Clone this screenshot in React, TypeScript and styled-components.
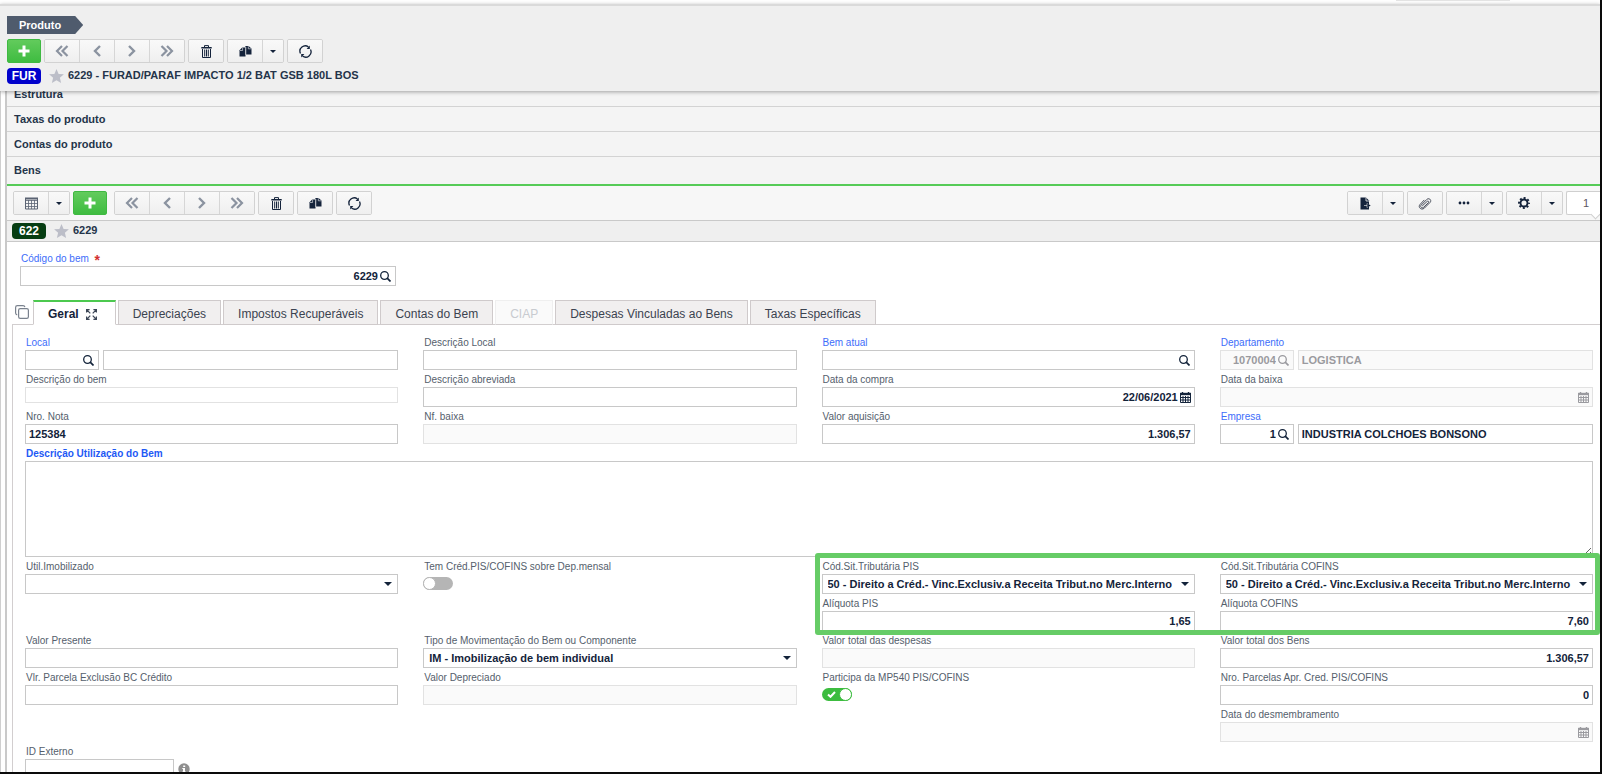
import React, { ReactNode, useId } from "react";
import styled, { createGlobalStyle, css } from "styled-components";

const ink = "#24344a";
const blue = "#3d6dfa";

const GlobalStyle = createGlobalStyle`
  *, *::before, *::after { box-sizing: border-box; }
  body { margin: 0; background: #fff; color: ${ink}; font-family: "Liberation Sans", Arial, sans-serif; font-size: 11px; }
  button, input, select, textarea { font: inherit; color: inherit; margin: 0; }
  svg { display: block; flex: none; }
`;

const Page = styled.div`
  display: flex;
  flex-direction: column;
  height: 100vh;
  overflow: hidden;
  border-right: 2px solid #0a0a0a;
  border-bottom: 2px solid #0a0a0a;
`;

const TopStrip = styled.div`
  display: flex;
  justify-content: flex-end;
  flex: none;
  height: 4px;
  padding-right: 90px;
`;

const TopHandle = styled.span`
  width: 114px;
  height: 1px;
  background: #e4e4e4;
`;

const Header = styled.header`
  position: relative;
  z-index: 2;
  flex: none;
  display: flex;
  flex-direction: column;
  align-items: flex-start;
  gap: 5px;
  padding: 10px 7px 7px;
  border-top: 2px solid #dadada;
  background: #efefef;
  box-shadow: 0 1px 4px rgba(0, 0, 0, 0.35);
`;

const Crumb = styled.h1`
  margin: 0;
  height: 18px;
  padding: 0 22px 0 12px;
  background: #4f5b6d;
  clip-path: polygon(0 0, calc(100% - 8px) 0, 100% 50%, calc(100% - 8px) 100%, 0 100%);
  color: #fff;
  font-size: 11px;
  font-weight: bold;
  line-height: 18px;
`;

const Bar = styled.div`
  display: flex;
  gap: 3px;
`;

const Group = styled.div`
  display: flex;
  border: 1px solid #d2d2d2;
  border-radius: 2px;
  overflow: hidden;
`;

const ToolButton = styled.button<{ $narrow?: boolean }>`
  display: flex;
  align-items: center;
  justify-content: center;
  width: ${(p) => (p.$narrow ? 21 : 35)}px;
  height: 22px;
  padding: 0;
  border: solid #d6d6d6;
  border-width: 0 0 0 1px;
  background: linear-gradient(#f9f9f9, #efefef);
  color: #14233b;
  &:first-child {
    width: 34px;
    border-left: 0;
  }
  &:disabled { color: #8b93a0; }
`;

const AddButton = styled.button`
  display: flex;
  align-items: center;
  justify-content: center;
  width: 34px;
  height: 24px;
  padding: 0;
  border: 1px solid #3fb942;
  border-radius: 2px;
  background: linear-gradient(#62cb5c, #3fbc41);
  color: #fff;
`;

const TitleRow = styled.div<{ $strip?: boolean }>`
  display: flex;
  align-items: center;
  height: 16px;
  font-weight: bold;
  line-height: 14px;
  ${(p) =>
    p.$strip &&
    css`
      height: 22px;
      padding-left: 5px;
      border: solid #c9c9c9;
      border-width: 1px 0;
      background: #efefef;
    `}
`;

const Badge = styled.span<{ $color: string }>`
  width: 34px;
  height: 16px;
  border-radius: 4px;
  background: ${(p) => p.$color};
  color: #fff;
  font-size: 12px;
  font-weight: bold;
  line-height: 16px;
  text-align: center;
`;

const Title = styled.span`
  padding-bottom: 2px;
`;

const Star = styled.svg`
  margin: 0 4px 0 8px;
`;

const Body = styled.main`
  flex: 1;
  min-height: 0;
  overflow: hidden;
  display: flex;
  padding-left: 4px;
  border-left: 1px solid #cfcfcf;
`;

const Content = styled.div`
  flex: 1;
  min-width: 0;
  border-left: 2px solid #c9c9c9;
`;

const Sections = styled.div`
  margin-top: -9px;
  border-bottom: 2px solid #56cb57;
`;

const Section = styled.h2`
  margin: 0;
  height: 25px;
  padding-left: 7px;
  border-bottom: 1px solid #d3d3d3;
  background: #f4f4f4;
  font-size: 11px;
  font-weight: bold;
  line-height: 24px;
  &:last-child { height: 27px; border: 0; line-height: 27px; }
`;

const SubToolbar = styled.div`
  display: flex;
  justify-content: space-between;
  padding: 5px 0 5px 6px;
  background: #f7f7f7;
`;

const WideBar = styled(Bar)`
  gap: 7px;
`;

const Pager = styled.button`
  position: relative;
  width: 34px;
  height: 24px;
  padding: 0 0 0 5px;
  border: 1px solid #cfcfcf;
  border-right: 0;
  border-radius: 2px 0 0 2px;
  background: #fff;
  color: #5c5560;
  &::after {
    content: "";
    position: absolute;
    right: 1px;
    bottom: -4px;
    width: 7px;
    height: 7px;
    border: solid #cfcfcf;
    border-width: 0 1px 1px 0;
    background: #fff;
    transform: rotate(45deg);
  }
`;

const KeyField = styled.div`
  width: 376px;
  max-width: 100%;
  margin: 8px 0 0 13px;
`;

const Label = styled.label<{ $tone?: "link" | "strong" }>`
  display: block;
  height: 16px;
  padding-left: 1px;
  color: ${(p) => (p.$tone === "strong" ? "#1d59f5" : p.$tone ? blue : "#55606c")};
  font-size: 10px;
  font-weight: ${(p) => (p.$tone === "strong" ? "bold" : "normal")};
  line-height: 18px;
  white-space: nowrap;
`;

const Required = styled.span`
  margin-left: 3px;
  color: #d32f2f;
  font-size: 14px;
  font-weight: bold;
  line-height: 0;
  vertical-align: sub;
`;

const Box = styled.div<{ $off?: boolean; $short?: boolean; $size?: number }>`
  position: relative;
  display: flex;
  align-items: center;
  gap: 2px;
  flex: ${(p) => (p.$size ? "none" : "1")};
  width: ${(p) => (p.$size ? `${p.$size}px` : "auto")};
  height: ${(p) => (p.$short ? 16 : 20)}px;
  padding-right: 3px;
  border: 1px solid ${(p) => (p.$off || p.$short ? "#e2e2e2" : "#c8c8c8")};
  background: ${(p) => (p.$off ? "#fafafa" : "#fff")};
  color: ${(p) => (p.$off ? "#9a9a9f" : "#13233a")};
`;

const Input = styled.input<{ $right?: boolean }>`
  flex: 1;
  min-width: 0;
  height: 100%;
  padding: 0 0 0 3px;
  border: 0;
  outline: 0;
  background: transparent;
  font-weight: bold;
  text-align: ${(p) => (p.$right ? "right" : "left")};
`;

const Select = styled.select`
  flex: 1;
  min-width: 0;
  height: 100%;
  padding: 0 14px 0 5px;
  border: 0;
  outline: 0;
  appearance: none;
  background: transparent;
  font-weight: bold;
`;

const SelectArrow = styled.span`
  position: absolute;
  right: 5px;
  pointer-events: none;
`;

const Line = styled.div`
  display: flex;
  align-items: center;
  gap: 4px;
`;

const TabRow = styled.div`
  display: flex;
  align-items: flex-end;
  margin: 14px 0 0 5px;
  border-bottom: 1px solid #d2cecf;
`;

const Tabs = styled.div`
  display: flex;
  gap: 2px;
  margin-bottom: -1px;
`;

const CopyView = styled.button`
  display: flex;
  width: 21px;
  height: 20px;
  padding: 1px 0 0 3px;
  border: 0;
  background: none;
  color: #7a828e;
`;

const Tab = styled.button<{ $active?: boolean }>`
  display: flex;
  align-items: center;
  height: 25px;
  padding: 3px 14px 0;
  border: 1px solid #cfcacb;
  background: #f1efef;
  color: #3b4350;
  font-size: 12px;
  line-height: 20px;
  white-space: nowrap;
  &:disabled { border-color: #efefef #efefef #d2cecf; background: #fafafa; color: #c8cbd0; }
  ${(p) =>
    p.$active &&
    css`
      gap: 7px;
      padding: 2px 18px 0 14px;
      border-top: 2px solid #4cc94f;
      border-bottom-color: #fff;
      background: #fff;
      color: #14233b;
      font-weight: bold;
    `}
`;

const Panel = styled.section`
  margin-left: 5px;
  padding: 9px 7px 9px 12px;
  border-left: 1px solid #d2cecf;
`;

const Form = styled.form`
  display: grid;
  grid-template-columns: repeat(4, minmax(0, 1fr));
  gap: 1px 25px;
`;

const Cell = styled.div<{ $col: number; $row: number; $span?: number }>`
  grid-column: ${(p) => p.$col} / span ${(p) => p.$span ?? 1};
  grid-row: ${(p) => p.$row};
`;

const Highlight = styled.div`
  grid-area: 5 / 3 / 7 / 5;
  z-index: 1;
  margin: -5px -7px -4px;
  border: 5px solid #66cc66;
  border-radius: 3px;
  pointer-events: none;
`;

const TextArea = styled.textarea`
  display: block;
  width: 100%;
  height: 96px;
  border: 1px solid #c8c8c8;
  outline: 0;
  resize: vertical;
`;

const Toggle = styled.span`
  position: relative;
  display: block;
  width: 30px;
  height: 13px;
  margin-top: 3px;
  color: #fff;
  svg { position: absolute; left: 5px; top: 3px; }
`;

const ToggleInput = styled.input`
  display: block;
  width: 30px;
  height: 13px;
  appearance: none;
  border-radius: 7px;
  background: #b5b5b5;
  &::before {
    content: "";
    display: block;
    width: 13px;
    height: 13px;
    border: 1px solid #b5b5b5;
    border-radius: 7px;
    background: #fff;
  }
  &:checked { background: #3cbc3f; }
  &:checked::before { margin-left: 17px; border-color: #3cbc3f; }
`;

/* icons */

const Stroke = ({ w, h, d, sw = 2 }: { w: number; h: number; d: string; sw?: number }) => (
  <svg width={w} height={h} viewBox={`0 0 ${w} ${h}`} fill="none" stroke="currentColor" strokeWidth={sw} aria-hidden>
    <path d={d} />
  </svg>
);

const Plus = () => <Stroke w={14} h={14} sw={3} d="M7 1.500v11M1.500 7h11" />;
const First = () => <Stroke w={14} h={12} sw={2.2} d="M7 1 2 6l5 5M12.500 1l-5 5 5 5" />;
const Prev = () => <Stroke w={10} h={12} sw={2.4} d="M8 1 3 6l5 5" />;
const Next = () => <Stroke w={10} h={12} sw={2.4} d="M2 1l5 5-5 5" />;
const Last = () => <Stroke w={14} h={12} sw={2.2} d="M1.500 1l5 5-5 5M7 1l5 5-5 5" />;

const Trash = () => (
  <svg width="11" height="13" viewBox="0 0 11 13" fill="none" stroke="currentColor" aria-hidden>
    <path d="M3.500 2V.6h4V2" />
    <path d="M.3 2.700h10.400" strokeWidth="1.500" />
    <path d="M1.500 4v8.500h8V4" />
    <path d="M3.700 4.500v7M5.500 4.500v7M7.300 4.500v7" />
  </svg>
);

const Duplicate = () => (
  <svg width="13" height="12" viewBox="0 0 13 12" fill="currentColor" aria-hidden>
    <path d="M3.200 2.500H6.500V11.500H.5V5.200z" />
    <path d="M6.300 1H9.500L12.500 3.500V9.500H7V5z" />
    <path d="M3.600 2.600v2.900H.8M9.300 1.200v2.600h3M6.800 2v8" fill="none" stroke="#f4f4f4" strokeWidth=".6" />
  </svg>
);

const Refresh = () => (
  <svg width="13" height="13" viewBox="0 0 13 13" fill="none" stroke="currentColor" strokeWidth="1.300" aria-hidden>
    <path d="M1.500 8.500A5.300 5.300 0 0 1 9.500 2M11.500 4.500A5.300 5.300 0 0 1 3.500 11" />
    <path d="M10.800.6v3.400H7.600zM2.200 12.400V9h3.200z" fill="currentColor" stroke="none" />
  </svg>
);

const Caret = ({ w = 6, h = 3 }: { w?: number; h?: number }) => (
  <svg width={w} height={h} viewBox="0 0 8 4" preserveAspectRatio="none" fill="currentColor" aria-hidden>
    <path d="M0 0h8L4 4z" />
  </svg>
);

const TableIcon = () => (
  <svg width="13" height="13" viewBox="0 0 13 13" fill="none" stroke="#5a6373" aria-hidden>
    <path d="M.5 3.500h12M.5 6.500h12M.5 9.500h12M3.500 3v9M6.500 3v9M9.500 3v9" strokeWidth=".8" />
    <path d="M.5 1.500h12v10.500H.5z" />
    <path d="M0 1.500h13" strokeWidth="2" />
  </svg>
);

const ExportFile = () => (
  <svg width="11" height="13" viewBox="0 0 11 13" aria-hidden>
    <path d="M.5.5H6L9 3.500v9H.5z" fill="currentColor" />
    <path d="M6 .5V4h3" fill="none" stroke="#f4f4f4" strokeWidth=".8" />
    <path d="M4 8.500h3.500M7 6.500l3 2-3 2z" stroke="#f4f4f4" strokeWidth=".6" fill="currentColor" />
    <path d="M7.500 6.500l3.200 2-3.200 2z" fill="currentColor" />
  </svg>
);

const Clip = () => (
  <svg width="14" height="13" viewBox="0 0 14 13" fill="none" stroke="#4a4f5c" strokeLinecap="round" aria-hidden>
    <path d="M4.500 8.700l4.700-4.300c1-.9 2.200.2 1.300 1.200L5.600 10.300c-1.700 1.600-4-.5-2.400-2.200L8.700 2.500c2.300-2.200 5.500.7 3.300 3L6.500 11c-2.800 2.800-7-.5-4.500-3.500L6 3.200" />
  </svg>
);

const Dots = () => (
  <svg width="12" height="4" viewBox="0 0 12 4" fill="currentColor" aria-hidden>
    <circle cx="2" cy="2" r="1.400" /><circle cx="6" cy="2" r="1.400" /><circle cx="10" cy="2" r="1.400" />
  </svg>
);

const Gear = () => (
  <svg width="12" height="12" viewBox="0 0 12 12" fill="none" stroke="currentColor" aria-hidden>
    <circle cx="6" cy="6" r="3.500" strokeWidth="1.900" />
    <circle cx="6" cy="6" r="5" strokeWidth="1.900" strokeDasharray="1.960 1.967" strokeDashoffset=".98" />
  </svg>
);

const SearchIcon = styled.svg`
  margin-right: 1px;
`;

const Search = () => (
  <SearchIcon width="11" height="11" viewBox="0 0 11 11" fill="none" stroke="currentColor" aria-hidden>
    <circle cx="4.500" cy="4.500" r="3.800" strokeWidth="1.300" />
    <path d="M7.200 7.200l3.300 3.300" strokeWidth="1.700" />
  </SearchIcon>
);

const Calendar = () => (
  <svg width="11" height="11" viewBox="0 0 11 11" fill="none" stroke="currentColor" aria-hidden>
    <path d="M0 2h11" strokeWidth="2.400" />
    <path d="M2.500 0v2M8.500 0v2" strokeWidth="1.400" />
    <path d="M.5 3v7.500h10V3M3 4v6M5.500 4v6M8 4v6M1 5.500h9M1 8h9" />
  </svg>
);

const Expand = () => (
  <svg width="11" height="11" viewBox="0 0 11 11" fill="none" stroke="#3c4656" strokeWidth="1.200" aria-hidden>
    <path d="M.6 3.500V.6h3M7.400.6h3v3M10.400 7.500v2.900h-3M3.600 10.400h-3v-3M1 1l3.300 3.300M10 1L6.700 4.300M10 10L6.700 6.700M1 10l3.300-3.300" />
  </svg>
);

const Layers = () => (
  <svg width="14" height="14" viewBox="0 0 14 14" fill="none" stroke="currentColor" strokeWidth="1.200" aria-hidden>
    <rect x="3.600" y="3.600" width="9.800" height="9.800" rx="1.600" />
    <path d="M2.200 9.800C1 9.600.6 9 .6 8V2.400C.6 1.200 1.200.6 2.400.6H8c1.200 0 1.700.4 1.900 1.600" />
  </svg>
);

const Info = () => (
  <svg width="12" height="12" viewBox="0 0 12 12" aria-label="Informação" role="img">
    <circle cx="6" cy="6" r="5.700" fill="#8f8f8f" />
    <path d="M5.200 2.500h2v1.500h-2zM4.300 5h2.700v3.500h.8v1H4.300v-1H5V6h-.7z" fill="#fff" />
  </svg>
);

const StarIcon = () => (
  <Star width="15" height="14" viewBox="0 0 15 14" fill="#bcbec8" aria-hidden>
    <path d="M7.500 0l2.100 4.900 5.300.4-4 3.500 1.200 5.200-4.600-2.800L2.900 14l1.200-5.200-4-3.500 5.300-.4z" />
  </Star>
);

/* building blocks */

const Tool = ({ name, children, off, narrow }: { name: string; children: ReactNode; off?: boolean; narrow?: boolean }) => (
  <ToolButton type="button" aria-label={name} disabled={off} $narrow={narrow}>{children}</ToolButton>
);

const More = ({ name }: { name: string }) => <Tool name={name} narrow><Caret /></Tool>;

const Navigation = () => (
  <Group>
    <Tool name="Primeiro" off><First /></Tool>
    <Tool name="Anterior" off><Prev /></Tool>
    <Tool name="Próximo" off><Next /></Tool>
    <Tool name="Último" off><Last /></Tool>
  </Group>
);

type FieldProps = {
  col: number;
  row: number;
  label: string;
  value?: string;
  tone?: "link" | "strong";
  icon?: ReactNode;
  right?: boolean;
  off?: boolean;
  short?: boolean;
  size?: number;
  after?: ReactNode;
  text?: string;
};

const Field = ({ col, row, label, value = "", tone, icon, right, off, short, size, after, text }: FieldProps) => {
  const id = useId();
  return (
    <Cell $col={col} $row={row}>
      <Label htmlFor={id} $tone={tone}>{label}</Label>
      <Line>
        <Box $off={off} $short={short} $size={size}>
          <Input id={id} defaultValue={value} disabled={off} $right={right} />
          {icon}
        </Box>
        {text !== undefined && (
          <Box $off={off}>
            <Input aria-label={`${label} - descrição`} defaultValue={text} disabled={off} />
          </Box>
        )}
        {after}
      </Line>
    </Cell>
  );
};

const Choice = ({ col, row, label, value }: { col: number; row: number; label: string; value: string }) => {
  const id = useId();
  return (
    <Cell $col={col} $row={row}>
      <Label htmlFor={id}>{label}</Label>
      <Box>
        <Select id={id} defaultValue={value}><option>{value}</option></Select>
        <SelectArrow><Caret w={8} h={4} /></SelectArrow>
      </Box>
    </Cell>
  );
};

const Switch = ({ col, row, label, on }: { col: number; row: number; label: string; on?: boolean }) => {
  const id = useId();
  return (
    <Cell $col={col} $row={row}>
      <Label htmlFor={id}>{label}</Label>
      <Toggle>
        <ToggleInput id={id} type="checkbox" defaultChecked={on} />
        {on && <Stroke w={9} h={7} d="M1 3.500l2.500 2.300L8 1" />}
      </Toggle>
    </Cell>
  );
};

const cst = "50 - Direito a Créd.- Vinc.Exclusiv.a Receita Tribut.no Merc.Interno";

export default function App() {
  return (
    <>
      <GlobalStyle />
      <Page>
        <TopStrip><TopHandle /></TopStrip>
        <Header>
          <Crumb>Produto</Crumb>
          <Bar>
            <AddButton type="button" aria-label="Adicionar produto"><Plus /></AddButton>
            <Navigation />
            <Group><Tool name="Excluir"><Trash /></Tool></Group>
            <Group><Tool name="Duplicar"><Duplicate /></Tool><More name="Opções de duplicar" /></Group>
            <Group><Tool name="Atualizar"><Refresh /></Tool></Group>
          </Bar>
          <TitleRow>
            <Badge $color="#0202cc">FUR</Badge>
            <StarIcon />
            <Title>6229 - FURAD/PARAF IMPACTO 1/2 BAT GSB 180L BOS</Title>
          </TitleRow>
        </Header>
        <Body>
          <Content>
            <Sections>
              <Section>Estrutura</Section>
              <Section>Taxas do produto</Section>
              <Section>Contas do produto</Section>
              <Section>Bens</Section>
            </Sections>
            <SubToolbar>
              <WideBar>
                <Bar>
                  <Group><Tool name="Modo grade"><TableIcon /></Tool><More name="Opções de grade" /></Group>
                  <AddButton type="button" aria-label="Adicionar bem"><Plus /></AddButton>
                </Bar>
                <Bar>
                  <Navigation />
                  <Group><Tool name="Excluir bem"><Trash /></Tool></Group>
                  <Group><Tool name="Duplicar bem"><Duplicate /></Tool></Group>
                  <Group><Tool name="Atualizar bem"><Refresh /></Tool></Group>
                </Bar>
              </WideBar>
              <Bar>
                <Group><Tool name="Exportar"><ExportFile /></Tool><More name="Opções de exportar" /></Group>
                <Group><Tool name="Anexos"><Clip /></Tool></Group>
                <Group><Tool name="Mais"><Dots /></Tool><More name="Mais opções" /></Group>
                <Group><Tool name="Configurar"><Gear /></Tool><More name="Opções de configuração" /></Group>
                <Pager type="button">1</Pager>
              </Bar>
            </SubToolbar>
            <TitleRow $strip>
              <Badge $color="#063d12">622</Badge>
              <StarIcon />
              <Title>6229</Title>
            </TitleRow>
            <KeyField>
              <Label htmlFor="codigo" $tone="link">Código do bem <Required>*</Required></Label>
              <Box>
                <Input id="codigo" defaultValue="6229" $right />
                <Search />
              </Box>
            </KeyField>
            <TabRow>
              <CopyView type="button" aria-label="Alternar visualização"><Layers /></CopyView>
              <Tabs role="tablist">
                <Tab type="button" role="tab" aria-selected $active>Geral <Expand /></Tab>
                <Tab type="button" role="tab">Depreciações</Tab>
                <Tab type="button" role="tab">Impostos Recuperáveis</Tab>
                <Tab type="button" role="tab">Contas do Bem</Tab>
                <Tab type="button" role="tab" disabled>CIAP</Tab>
                <Tab type="button" role="tab">Despesas Vinculadas ao Bens</Tab>
                <Tab type="button" role="tab">Taxas Específicas</Tab>
              </Tabs>
            </TabRow>
            <Panel>
              <Form>
                <Field col={1} row={1} label="Local" tone="link" size={74} icon={<Search />} text="" />
                <Field col={2} row={1} label="Descrição Local" />
                <Field col={3} row={1} label="Bem atual" tone="link" icon={<Search />} />
                <Field col={4} row={1} label="Departamento" tone="link" size={74} icon={<Search />} value="1070004" text="LOGISTICA" right off />

                <Field col={1} row={2} label="Descrição do bem" short />
                <Field col={2} row={2} label="Descrição abreviada" />
                <Field col={3} row={2} label="Data da compra" value="22/06/2021" icon={<Calendar />} right />
                <Field col={4} row={2} label="Data da baixa" icon={<Calendar />} off />

                <Field col={1} row={3} label="Nro. Nota" value="125384" />
                <Field col={2} row={3} label="Nf. baixa" off />
                <Field col={3} row={3} label="Valor aquisição" value="1.306,57" right />
                <Field col={4} row={3} label="Empresa" tone="link" size={74} icon={<Search />} value="1" text="INDUSTRIA COLCHOES BONSONO" right />

                <Cell $col={1} $row={4} $span={4}>
                  <Label htmlFor="utilizacao" $tone="strong">Descrição Utilização do Bem</Label>
                  <TextArea id="utilizacao" />
                </Cell>

                <Choice col={1} row={5} label="Util.Imobilizado" value="" />
                <Switch col={2} row={5} label="Tem Créd.PIS/COFINS sobre Dep.mensal" />
                <Choice col={3} row={5} label="Cód.Sit.Tributária PIS" value={cst} />
                <Choice col={4} row={5} label="Cód.Sit.Tributária COFINS" value={cst} />

                <Field col={3} row={6} label="Alíquota PIS" value="1,65" right />
                <Field col={4} row={6} label="Alíquota COFINS" value="7,60" right />
                <Highlight />

                <Field col={1} row={7} label="Valor Presente" />
                <Choice col={2} row={7} label="Tipo de Movimentação do Bem ou Componente" value="IM - Imobilização de bem individual" />
                <Field col={3} row={7} label="Valor total das despesas" off />
                <Field col={4} row={7} label="Valor total dos Bens" value="1.306,57" right />

                <Field col={1} row={8} label="Vlr. Parcela Exclusão BC Crédito" />
                <Field col={2} row={8} label="Valor Depreciado" off />
                <Switch col={3} row={8} label="Participa da MP540 PIS/COFINS" on />
                <Field col={4} row={8} label="Nro. Parcelas Apr. Cred. PIS/COFINS" value="0" right />

                <Field col={4} row={9} label="Data do desmembramento" icon={<Calendar />} off />
                <Field col={1} row={10} label="ID Externo" size={149} after={<Info />} />
              </Form>
            </Panel>
          </Content>
        </Body>
      </Page>
    </>
  );
}
